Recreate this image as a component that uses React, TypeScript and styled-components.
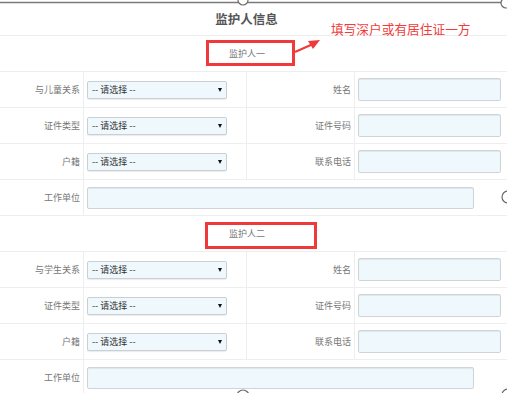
import React from 'react';
import styled, {createGlobalStyle} from 'styled-components';

const GlobalStyle = createGlobalStyle`
    body {
        margin: 0;
        background: #fff;
        overflow: hidden;
        font-family: "Noto Sans CJK SC", "Noto Sans", "Liberation Sans", sans-serif;
    }
`;

type Field = {label: string; kind: 'select' | 'input'};
type Guardian = {
    title: string;
    rows: [Field, Field][];
    box: {left: number; top: number; width: number; height: number};
};

const guardians: Guardian[] = [
    {
        title: '监护人一',
        rows: [
            [{label: '与儿童关系', kind: 'select'}, {label: '姓名', kind: 'input'}],
            [{label: '证件类型', kind: 'select'}, {label: '证件号码', kind: 'input'}],
            [{label: '户籍', kind: 'select'}, {label: '联系电话', kind: 'input'}],
        ],
        box: {left: 206, top: 4, width: 89, height: 26},
    },
    {
        title: '监护人二',
        rows: [
            [{label: '与学生关系', kind: 'select'}, {label: '姓名', kind: 'input'}],
            [{label: '证件类型', kind: 'select'}, {label: '证件号码', kind: 'input'}],
            [{label: '户籍', kind: 'select'}, {label: '联系电话', kind: 'input'}],
        ],
        box: {left: 205, top: 6, width: 112, height: 27},
    },
];

const Control = ({kind, wide}: {kind: 'select' | 'input'; wide?: boolean}) =>
    kind === 'select' ? (
        <SelectWrap>
            <Select defaultValue="">
                <option value="">-- 请选择 --</option>
            </Select>
            <Caret/>
        </SelectWrap>
    ) : (
        <TextInput $wide={wide}/>
    );

const App: React.FunctionComponent = () => {
    return (
        <>
            <GlobalStyle/>
            <Page>
                <Title>监护人信息</Title>
                {guardians.map((g) => (
                    <React.Fragment key={g.title}>
                        <SectionHead>
                            {g.title}
                            <Mark style={{left: g.box.left, top: g.box.top, width: g.box.width, height: g.box.height}}/>
                        </SectionHead>
                        {g.rows.map(([a, b]) => (
                            <Row key={a.label}>
                                <Label>{a.label}</Label>
                                <Cell><Control kind={a.kind}/></Cell>
                                <Label>{b.label}</Label>
                                <Cell $last><Control kind={b.kind}/></Cell>
                            </Row>
                        ))}
                        <Row>
                            <Label>工作单位</Label>
                            <Cell $span $last><Control kind="input" wide/></Cell>
                        </Row>
                    </React.Fragment>
                ))}

                <Note>填写深户或有居住证一方</Note>
                <Overlay width="507" height="393" viewBox="0 0 507 393">
                    <line x1="0" y1="2.5" x2="501" y2="2.5" stroke="#7a7a7a" strokeWidth="1.5"/>
                    <circle cx="243" cy="0" r="5" fill="#fff" stroke="#6a6a6a" strokeWidth="1.2"/>
                    <circle cx="506" cy="3" r="5" fill="#fff" stroke="#6a6a6a" strokeWidth="1.2"/>
                    <circle cx="508" cy="197" r="6" fill="#fff" stroke="#6a6a6a" strokeWidth="1.2"/>
                    <circle cx="243" cy="396" r="6" fill="#fff" stroke="#6a6a6a" strokeWidth="1.2"/>
                    <circle cx="508" cy="395" r="6" fill="#fff" stroke="#6a6a6a" strokeWidth="1.2"/>
                    <line x1="295" y1="52" x2="313" y2="44" stroke="#f03a3a" strokeWidth="2.2"/>
                    <polygon points="320,40 308,41 313,49" fill="#f03a3a"/>
                </Overlay>
            </Page>
        </>
    );
}

const Page = styled.div`
    position: relative;
    width: 507px;
    height: 393px;
    overflow: hidden;
    background: #fff;
`;

const Title = styled.div`
    box-sizing: border-box;
    height: 36px;
    padding: 2px 14px 0 0;
    display: flex;
    align-items: center;
    justify-content: center;
    font-size: 12.5px;
    font-weight: bold;
    color: #555;
    border-bottom: 1px solid #eee;
`;

const SectionHead = styled.div`
    position: relative;
    box-sizing: border-box;
    height: 36px;
    padding-right: 13px;
    display: flex;
    align-items: center;
    justify-content: center;
    font-size: 9px;
    color: #777;
    border-bottom: 1px solid #eee;
`;

const Mark = styled.span`
    position: absolute;
    box-sizing: border-box;
    border: 3px solid #f03a3a;
`;

const Row = styled.div`
    box-sizing: border-box;
    height: 36px;
    display: grid;
    grid-template-columns: 84px 163px 108px 1fr;
    border-bottom: 1px solid #eee;
`;

const Label = styled.div`
    display: flex;
    align-items: center;
    justify-content: flex-end;
    padding-right: 3px;
    font-size: 9px;
    color: #777;
    border-right: 1px solid #eee;
`;

const Cell = styled.div<{$span?: boolean; $last?: boolean}>`
    display: flex;
    align-items: center;
    padding-left: 3px;
    grid-column: ${(p) => (p.$span ? 'span 3' : 'auto')};
    border-right: ${(p) => (p.$last ? 'none' : '1px solid #eee')};
`;

const SelectWrap = styled.div`
    position: relative;
    width: 140px;
    height: 18px;
`;

const Select = styled.select`
    display: block;
    appearance: none;
    box-sizing: border-box;
    width: 100%;
    height: 100%;
    margin: 0;
    padding: 0 0 0 4px;
    font-family: "Noto Sans CJK SC", "Liberation Sans", sans-serif;
    font-size: 9px;
    line-height: 16px;
    color: #333;
    background: #eff8fc;
    border: 1px solid #c9cfd2;
    border-radius: 2px;
    box-shadow: 0 1px 1px rgba(0, 0, 0, 0.08);
    outline: none;
`;

const Caret = styled.span`
    position: absolute;
    right: 5px;
    top: 7px;
    width: 0;
    height: 0;
    border-left: 2.5px solid transparent;
    border-right: 2.5px solid transparent;
    border-top: 4px solid #111;
    pointer-events: none;
`;

const TextInput = styled.input<{$wide?: boolean}>`
    display: block;
    box-sizing: border-box;
    width: ${(p) => (p.$wide ? '387px' : '143px')};
    height: ${(p) => (p.$wide ? '22px' : '23px')};
    margin: 0;
    padding: 0 4px;
    background: #eff8fc;
    border: 1px solid #cfd4d6;
    border-radius: 2px;
    box-shadow: inset 0 1px 1px rgba(0, 0, 0, 0.07);
    outline: none;
`;

const Note = styled.div`
    position: absolute;
    left: 331px;
    top: 20px;
    font-size: 12.7px;
    line-height: 18px;
    color: #f23b3b;
    white-space: nowrap;
`;

const Overlay = styled.svg`
    position: absolute;
    left: 0;
    top: 0;
    pointer-events: none;
`;

export default App;
